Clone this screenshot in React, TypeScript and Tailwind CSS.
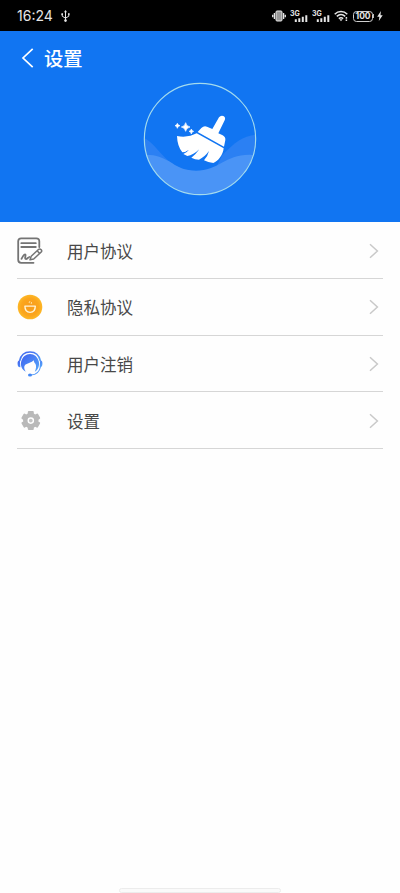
import type { ReactNode } from "react";

function StatusBar() {
  return (
    <div className="flex h-[31px] items-center bg-black pl-[17px] pr-[17px] pt-[1px] text-[#e6e6e6]">
      <span className="font-['Inter','Noto_Sans',sans-serif] text-[14px] leading-none tracking-[0px]">
        16:24
      </span>
      <svg className="ml-[8px]" width="9" height="12" viewBox="0 0 9 12" fill="none" stroke="currentColor" strokeWidth="1">
        <path d="M4.5 1v10M1.2 4v2.2l3.3 2M7.8 3.8v2.4l-3.3 2" />
        <path d="M4.5 0 6 2.2H3z" fill="currentColor" stroke="none" />
        <circle cx="4.5" cy="10.6" r="1.3" fill="currentColor" stroke="none" />
        <path d="M.4 3.3H2v1.6H.4zM7 3.2h1.6v1.6H7z" fill="currentColor" stroke="none" />
      </svg>
      <div className="ml-auto flex items-center">
        <svg width="14" height="12" viewBox="0 0 14 12" fill="none" stroke="currentColor">
          <rect x="4" y="1" width="6" height="10" rx="1" fill="#999" />
          <path d="M2.4 3v6M11.6 3v6M.7 4.7v2.6M13.3 4.7v2.6" strokeWidth="1.3" />
        </svg>
        <Signal className="ml-[4px]" />
        <Signal className="ml-[4px]" />
        <svg className="ml-[4px]" width="15" height="12" viewBox="0 0 15 12" fill="none" stroke="currentColor" strokeWidth="1.5">
          <path d="M.7 4.2C4.3.6 9.7.6 13.3 4.2M2.8 6.4c2.5-2.3 5.9-2.3 8.4 0M4.8 8.6c1.4-1.2 3-1.2 4.4 0" />
          <path d="m5.4 9.3 1.6 2 1.6-2z" fill="currentColor" stroke="none" />
          <path d="M12.4 7v1.8M12.4 9.6v1.4" />
        </svg>
        <div className="ml-[4px] flex h-[11px] w-[20px] items-center justify-center rounded-[3.5px] border border-[#cfcfcf] font-['Inter',sans-serif] text-[8.5px] font-bold leading-none tracking-[-0.1px]">
          100
        </div>
        <div className="h-[4px] w-px bg-[#bbb]" />
        <svg className="ml-[3px]" width="6" height="10" viewBox="0 0 6 10" fill="currentColor">
          <path d="M3.9 0 .2 5.7h2.2L1.8 10l3.9-5.8H3.5z" />
        </svg>
      </div>
    </div>
  );
}

function Signal({ className }: { className: string }) {
  return (
    <svg className={className} width="18" height="13" viewBox="0 0 18 13" fill="currentColor">
      <text x="0" y="6" fontSize="7" fontWeight="700" fontFamily="Inter, sans-serif">
        3G
      </text>
      <path d="M4.8 9.2h2v2.8h-2zM8.3 8.2h2V12h-2zM11.8 6.8h2V12h-2zM15.3 5.2h2V12h-2z" />
    </svg>
  );
}

function Logo() {
  return (
    <svg width="130" height="130" viewBox="0 0 390 390">
      <defs>
        <clipPath id="disc">
          <circle cx="195" cy="192" r="167" />
        </clipPath>
      </defs>
      <g clipPath="url(#disc)">
        <path d="M262 240C300 202 325 181 370 179V365H200Z" fill="#2b80f3" />
        <path d="M20 185C72 205 90 287 182 287L150 330H20Z" fill="#2b80f3" />
        <path d="M20 240C58 237 82 247 112 265C132 279 152 287 182 287C252 287 270 238 345 239L370 242V370H20Z" fill="#4a94f6" />
      </g>
      <circle cx="195" cy="192" r="167" fill="none" stroke="#a4dbed" strokeWidth="3.5" />
      <g fill="#fff">
        <path d="M252 127Q257 120 265 123Q273 127 269 136L250 175L263 181Q272 186 271 195L267 215L188 171L199 159Q207 151 216 155L232 162Z" />
        <path d="M185 175L266 220C264 240 250 258 235 264Q219 262 207 256Q219 242 222 228Q209 246 192 254Q180 254 169 248Q182 239 193 223Q175 240 157 243L145 237Q155 233 162 224Q151 232 142 232Q127 214 126 183C150 188 169 183 185 175Z" />
        <path d="M152 143Q154 154 165 156Q154 158 152 169Q150 158 139 156Q150 154 152 143ZM127 145Q128 151 135 152Q128 153 127 160Q126 153 120 152Q126 151 127 145ZM169 162Q170 168 176 169Q170 170 169 177Q168 170 162 169Q168 168 169 162Z" stroke="#fff" strokeWidth="2" />
      </g>
    </svg>
  );
}

function AgreementIcon() {
  return (
    <svg width="26" height="28" viewBox="0 0 26 28" fill="none" stroke="#747474" strokeWidth="1.8" strokeLinecap="round" strokeLinejoin="round">
      <path d="M22.3 10V4.3Q22.3 1.3 19.3 1.3H4.2Q1.2 1.3 1.2 4.3V22.8Q1.2 25.8 4.2 25.8H16.5" />
      <path d="M4.3 6.2h14.5M4.3 10h14.5" />
      <path d="M4.5 21.8C6 19 7.3 17 8.3 17.5C9.4 18.1 7 21.5 8.7 22C10 22.4 11 20.4 12.3 20" />
      <path d="M13 22.8 14.2 19.2 21.7 12.3Q23 11.5 24.2 12.7Q25.3 14 24 15.2L16.7 22Z M20.2 13.8l2.4 2.6" strokeWidth="1.5" />
    </svg>
  );
}

function PrivacyIcon() {
  return (
    <svg width="26" height="26" viewBox="0 0 26 26">
      <defs>
        <radialGradient id="amber">
          <stop offset="0" stopColor="#f79b1c" />
          <stop offset="0.7" stopColor="#fba51c" />
          <stop offset="1" stopColor="#fdb827" />
        </radialGradient>
      </defs>
      <circle cx="13" cy="13" r="12.3" fill="url(#amber)" />
      <path d="M7.9 12.1H18.3C18.3 16.3 16.4 18.4 13.1 18.4S7.9 16.3 7.9 12.1Z" fill="none" stroke="#fff4d5" strokeWidth="1.4" strokeLinejoin="round" />
      <path d="M13 7.2q-1.7 1.1 0 2.1M14.7 8q-1 1 .1 1.8" fill="none" stroke="#ffe2a0" strokeWidth="1" />
    </svg>
  );
}

function SupportIcon() {
  return (
    <svg width="26" height="26" viewBox="0 0 26 26">
      <defs>
        <linearGradient id="headset" x1="0" y1="0" x2="1" y2="1">
          <stop offset="0" stopColor="#3f61ef" />
          <stop offset="1" stopColor="#56a7fa" />
        </linearGradient>
      </defs>
      <path d="M2.6 10C3.8 4.2 7.7 1 13 1S22.2 4.2 23.4 10" fill="none" stroke="url(#headset)" strokeWidth="1.6" />
      <path d="M2.8 9.2C.9 9.6.4 11 .6 13C.7 15.4 1.7 16.4 3.4 16.2ZM23.2 9.2C25.1 9.6 25.6 11 25.4 13C25.3 15.4 24.3 16.4 22.6 16.2Z" fill="url(#headset)" />
      <path d="M8.8 20.8C4.5 18.8 3.3 14.3 4.2 10.6C5.4 5.8 8.9 3 13 3C17.4 3 20.7 6 21.8 10.5C22.7 14.6 21.2 18.8 17.8 20.8C19.4 17.5 19.4 14.6 18.4 12.8C17.3 11.6 16.8 10.3 16.8 9.2C14.7 11.6 10.6 11.9 8.2 13.8C6.6 15.4 7 18.2 8.8 20.8Z" fill="url(#headset)" />
      <path d="M23.4 16C22.5 21 18.5 23.7 14 24" fill="none" stroke="#569bf9" strokeWidth="1.1" />
      <ellipse cx="13" cy="23.9" rx="2" ry="1.5" fill="#4388f5" />
    </svg>
  );
}

function GearIcon() {
  return (
    <svg width="26" height="26" viewBox="0 0 26 26">
      <g fill="#b9b9b9">
        <circle cx="13.8" cy="12.6" r="7.7" />
        <rect x="10.8" y="3.1" width="6" height="19" rx="1" />
        <rect x="10.8" y="3.1" width="6" height="19" rx="1" transform="rotate(60 13.8 12.6)" />
        <rect x="10.8" y="3.1" width="6" height="19" rx="1" transform="rotate(120 13.8 12.6)" />
      </g>
      <circle cx="13.8" cy="12.6" r="2.6" fill="#c4c4c4" stroke="#fff" strokeWidth="1.4" />
    </svg>
  );
}

function MenuRow({ icon, label }: { icon: ReactNode; label: string }) {
  return (
    <li className="flex h-[56.7px] items-center border-b-[1.5px] border-[#d6d6d6] pt-[1px]">
      <span className="flex w-[50px] items-center">{icon}</span>
      <span className="pt-[0.6px] text-[16.5px] leading-none text-[#484848]">{label}</span>
      <svg className="ml-auto mr-[4.5px]" width="10" height="16" viewBox="0 0 10 16" fill="none" stroke="#c9c9c9" strokeWidth="1.5">
        <path d="m1 1.2 7.4 6.8L1 14.8" />
      </svg>
    </li>
  );
}

export default function App() {
  return (
    <div className="flex h-[893px] w-[400px] flex-col overflow-hidden bg-[#fefefe] font-['Noto_Sans_CJK_SC',sans-serif]">
      <StatusBar />
      <header className="flex h-[191px] flex-col items-center bg-[#1175f2]">
        <div className="flex h-[44px] w-full items-center pl-[21px] pt-[10px] text-white">
          <svg width="13" height="20" viewBox="0 0 13 20" fill="none" stroke="currentColor" strokeWidth="1.7">
            <path d="M11.7.8 2 10l9.7 9.2" />
          </svg>
          <h1 className="ml-[10px] pt-[2px] text-[19.3px] font-medium leading-none">设置</h1>
        </div>
        <Logo />
      </header>
      <ul className="mx-[17px] pt-[0.3px]">
        <MenuRow icon={<AgreementIcon />} label="用户协议" />
        <MenuRow icon={<PrivacyIcon />} label="隐私协议" />
        <MenuRow icon={<SupportIcon />} label="用户注销" />
        <MenuRow icon={<GearIcon />} label="设置" />
      </ul>
      <div className="mx-auto mb-0 mt-auto h-[5px] w-[162px] rounded-full border border-[#ececec] bg-[#fafafa]" />
    </div>
  );
}
